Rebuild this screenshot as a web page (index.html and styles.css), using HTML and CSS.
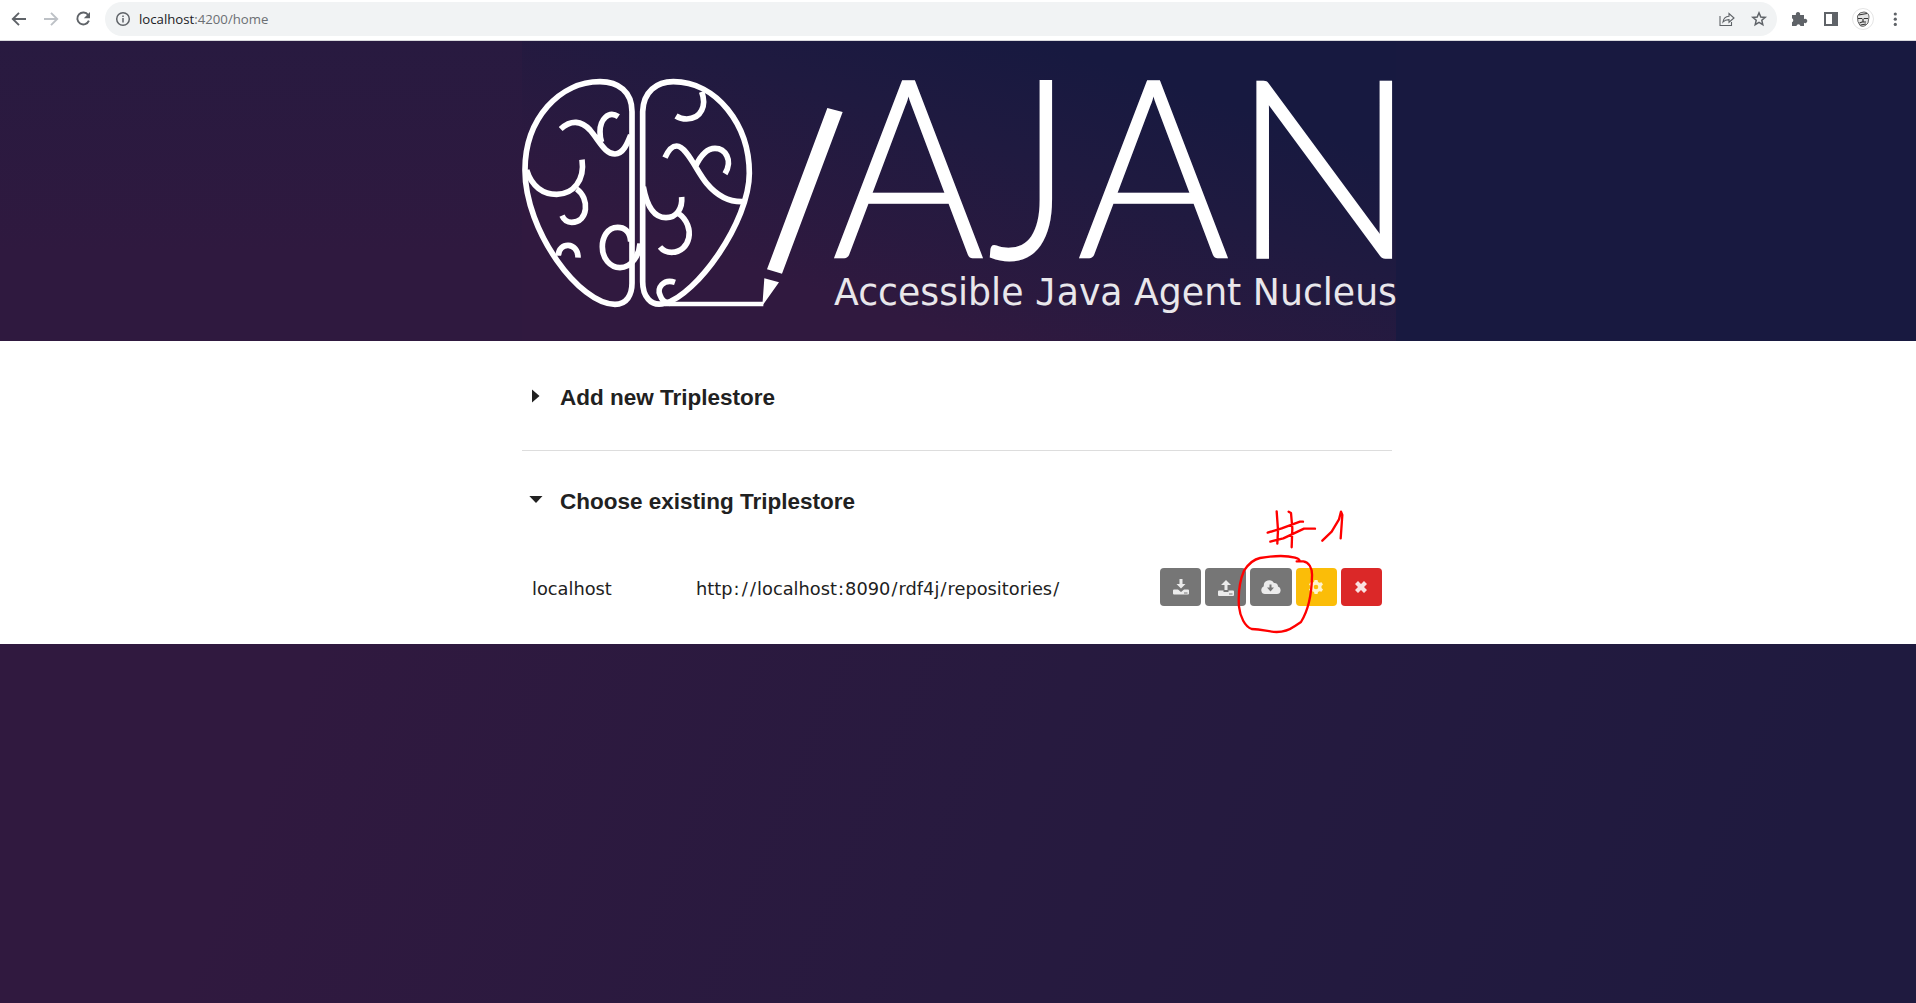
FILE: index.html
```html
<!DOCTYPE html>
<html lang="en">
<head>
<meta charset="utf-8">
<title>AJAN</title>
<link rel="stylesheet" href="styles.css">
</head>
<body>
<div class="browser-bar">
  <svg class="nav-icons" viewBox="0 0 105 40" fill="none" stroke="#5f6368" stroke-width="1.9">
    <path d="M26 19H13M19 12.8L12.8 19L19 25.2"/>
    <path stroke="#bdc1c6" d="M44 19H57M51 12.8L57.2 19L51 25.2"/>
    <path d="M88.2 15A6 6 0 1 0 88.9 20.7"/>
    <path fill="#5f6368" stroke="none" d="M90 12V18.2H83.8Z"/>
  </svg>
  <div class="address">
    <svg class="info" viewBox="0 0 16 16" fill="none" stroke="#5f6368" stroke-width="1.5"><circle cx="8" cy="8" r="6.3"/><path d="M8 7V11.5M8 4.4V6"/></svg>
    <span class="url"><b>localhost</b>:4200/home</span>
    <svg class="address-actions" viewBox="0 0 56 20" fill="none" stroke="#5f6368" stroke-width="1.1">
      <path d="M3 7V16.5H14.5V13M6 13C6.5 9 9 7.4 12 7.2V4.5L17 9L12 13.2V10.6C9.5 10.6 7.5 11.2 6 13Z"/>
      <path stroke-width="1.5" d="M42 3.8L43.8 8L48.2 8.4L44.8 11.3L45.8 15.7L42 13.4L38.2 15.7L39.2 11.3L35.8 8.4L40.2 8Z"/>
    </svg>
  </div>
  <svg class="toolbar" viewBox="1777 0 139 40">
    <path fill="#5f6368" d="M1792 15H1796A2.2 2.2 0 1 1 1800 15H1804V19A2.2 2.2 0 1 1 1804 22.8V26H1800.5A2.1 2.1 0 0 0 1796.4 26H1792V22.3A2.2 2.2 0 0 0 1792 18.3Z"/>
    <path fill="none" stroke="#5f6368" stroke-width="2" d="M1825 13H1837V25H1825Z"/>
    <path fill="#5f6368" d="M1832 12H1838V26H1832Z"/>
    <circle cx="1863" cy="19" r="10.5" fill="#fff" stroke="#ddd" stroke-width=".8"/>
    <path fill="#e4e4e4" stroke="#555" stroke-width=".9" d="M1857.500 16Q1859 12 1864 12Q1869 12.500 1869 17L1868 23Q1864 28 1860 25.500Q1857 22 1857.500 16Z"/>
    <path fill="none" stroke="#333" stroke-width="1.2" d="M1858.500 15L1867 13.500M1858 18.500H1862M1864 18.500H1868M1863 18.500V21.500M1859.500 23L1862 22H1866M1860.500 25L1866 24"/>
    <g fill="#5f6368"><circle cx="1895.300" cy="14" r="1.600"/><circle cx="1895.300" cy="19.200" r="1.600"/><circle cx="1895.300" cy="24.400" r="1.600"/></g>
  </svg>
</div>
<header class="banner">
  <svg class="logo" viewBox="522 41 874 300">
    <g transform="translate(510 65) scale(.33333)" fill="none" stroke="#fff" stroke-width="17">
      <path d="M366 140C366 80 325 50 270 50C150 50 45 160 45 315C45 500 210 718 315 718C350 718 366 690 366 655Z"/>
      <path d="M398 140C400 80 440 50 490 50C620 50 718 180 718 325C718 470 560 690 465 715C420 728 398 690 398 650Z"/>
      <path d="M152 192C185 162 215 168 240 195C270 230 285 267 315 267C340 267 352 235 362 210M325 155C295 135 270 165 270 200Q270 220 275 232"/>
      <path d="M50 315C65 365 100 388 140 388C190 388 225 345 216 284M200 372C240 400 235 472 185 472Q165 472 156 452"/>
      <path d="M145 572C145 530 205 530 204 578"/>
      <path d="M362 530C360 495 340 487 323 487C290 487 277 520 277 545C277 580 300 608 330 608C365 608 388 570 390 535"/>
      <path d="M575 80C590 120 575 162 530 162Q512 162 498 153"/>
      <path d="M465 278C475 255 485 243 500 243C530 243 560 320 590 355C615 385 650 412 700 410M556 305C570 275 590 250 615 250C645 250 670 285 645 326"/>
      <path d="M400 365C410 420 430 458 468 458C500 458 518 430 515 396M505 445C560 485 540 562 485 562Q463 562 450 546"/>
      <path d="M495 652C460 640 440 670 450 690Q457 712 480 715"/>
      <path stroke-width="14" d="M465 717H760"/>
    </g>
    <g transform="translate(740 65) scale(.33333)" fill="#fff"><path d="M262 129L308 141L126 626L81 613ZM73 640L117 652L67 722Z"/></g>
    <g class="wordmark">
      <text x="832" y="258" textLength="153" lengthAdjust="spacingAndGlyphs">A</text>
      <text class="hook" transform="translate(988.500 258) scale(.79 1)">J</text>
      <text x="1077" y="258" textLength="153" lengthAdjust="spacingAndGlyphs">A</text>
      <text transform="translate(1231.500 258) scale(.987 1)">N</text>
    </g>
    <text class="tagline" x="834" y="305" textLength="563" lengthAdjust="spacingAndGlyphs">Accessible <tspan class="serif-j">J</tspan>ava Agent Nucleus</text>
  </svg>
</header>
<main class="panel">
  <div class="content">
    <section class="section add">
      <h2><svg class="caret" viewBox="0 0 14 14"><path d="M3 .5L10.500 7L3 13.500Z"/></svg>Add new Triplestore</h2>
    </section>
    <section class="section choose">
      <h2><svg class="caret" viewBox="0 0 14 14"><path d="M.3 3L13.500 3L7 10Z"/></svg>Choose existing Triplestore</h2>
      <div class="store">
        <span class="name">localhost</span>
        <span class="uri">http<i>:</i><i>/</i><i>/</i>localhost<i>:</i>8090<i>/</i>rdf4j<i>/</i>repositories<i>/</i></span>
        <div class="actions">
          <button class="btn"><svg viewBox="0 0 16 16"><path fill-rule="evenodd" d="M6.500 0H9.500V5H12.500L8 9.500L3.500 5H6.500ZM1 10.500H5L8 13L11 10.500H15Q16 10.500 16 11.500V14.500Q16 15.500 15 15.500H1Q0 15.500 0 14.500V11.500Q0 10.500 1 10.500ZM11 13.500V14.500H14.500V13.500Z"/></svg></button>
          <button class="btn low"><svg viewBox="0 0 16 16"><path fill-rule="evenodd" d="M8 0L13 5H9.500V10H6.500V5H3ZM1 10.500H5.500V12H10.500V10.500H15Q16 10.500 16 11.500V15Q16 16 15 16H1Q0 16 0 15V11.500Q0 10.500 1 10.500ZM11 13.500V14.500H14.500V13.500Z"/></svg></button>
          <button class="btn"><svg class="cloud" viewBox="0 0 20 14"><path fill-rule="evenodd" d="M4 14A4 4 0 0 1 2.800 6.300A5.500 5.500 0 0 1 13 3A3.500 3.500 0 0 1 17 6.600A3.800 3.800 0 0 1 16 14ZM8.500 4.500V7.500H6L9.500 11.500L13 7.500H10.500V4.500Z"/></svg></button>
          <button class="btn edit"><svg viewBox="0 0 16 16"><path fill-rule="evenodd" d="M6.500 1H9.500L10 3L11.500 3.800L13.500 3.200L15 5.600L13.500 7V9L15 10.400L13.500 12.800L11.500 12.200L10 13L9.500 15H6.500L6 13L4.500 12.200L2.500 12.800L1 10.400L2.500 9V7L1 5.600L2.500 3.200L4.500 3.800L6 3ZM8 5.700A2.300 2.300 0 1 0 8 10.300A2.300 2.300 0 1 0 8 5.700Z"/></svg></button>
          <button class="btn remove"><svg viewBox="0 0 16 16"><path d="M2 5L5 2L8 5L11 2L14 5L11 8L14 11L11 14L8 11L5 14L2 11L5 8Z"/></svg></button>
        </div>
      </div>
    </section>
  </div>
</main>
<svg class="annotation" viewBox="0 0 780 450" fill="none" stroke="#f00" stroke-width="7" stroke-linecap="round" stroke-linejoin="round">
  <path d="M410 34L414 90L412 131M446 35L453 39L457 85L455 142M383 98L425 85L480 65H489M391 125L405 121L430 115L492 86H525M547 122L575 95L597 58L603 35L607 45L602 115"/>
  <path d="M470 184H490C505 186 518 202 516 230C515 275 505 330 483 366L465 378C445 392 430 396 410 396C385 396 370 388 335 387C315 380 300 350 297 320C294 280 300 240 312 212C330 185 345 177 360 174C395 168 440 166 465 173C478 177 480 180 478 184"/>
</svg>
</body>
</html>
```
FILE: styles.css
```css
* { box-sizing: border-box; }
body {
  margin: 0;
  height: 1003px;
  overflow: hidden;
  position: relative;
  background: linear-gradient(112deg, #30193f 25%, #271a3f 58%, #1f1a3f 92%);
  font-family: "DejaVu Sans", sans-serif;
  color: #212121;
}
.browser-bar {
  height: 41px;
  display: flex;
  align-items: flex-start;
  background: #fff;
  border-bottom: 1px solid #d8d8dc;
}
.nav-icons { width: 105px; height: 40px; flex: none; }
.address {
  flex: 1;
  display: flex;
  align-items: center;
  height: 34px;
  margin: 2px 0 0 0;
  padding: 0 4px 0 10px;
  border-radius: 17px;
  background: #f1f3f4;
}
.info { width: 16px; height: 16px; }
.url { margin-left: 8px; font: 13.2px "Open Sans", sans-serif; color: #6b6f73; }
.url b { font-weight: 400; color: #202124; }
.address-actions { width: 56px; height: 20px; margin-left: auto; }
.toolbar { width: 139px; height: 40px; flex: none; }
.banner {
  height: 300px;
  display: flex;
  padding-left: 522px;
  background: linear-gradient(90deg, transparent 1396px, #181940 1396px),
    linear-gradient(180deg, #281a40 0, #2f193f 70%);
}
.logo {
  width: 874px;
  height: 300px;
  background: linear-gradient(18deg, #30193f 25%, #1f1a40 60%, #171940 80%);
}
.wordmark {
  font: 300 249px Lato, sans-serif;
  fill: #fff;
  stroke: #fff;
  stroke-width: 1.5px;
}
.wordmark .hook { stroke-width: 3px; }
.tagline { font: 37px "DejaVu Sans", sans-serif; fill: #e9e7eb; }
.serif-j { font-family: "DejaVu Sans Mono", monospace; }
.panel { height: 303px; background: #fff; display: flex; justify-content: center; }
.content { width: 870px; margin-right: 2px; }
.section { display: flex; flex-direction: column; }
.add { height: 110px; border-bottom: 1px solid #ddd; padding-top: 42px; }
.choose { padding-top: 36px; }
h2 {
  display: flex;
  align-items: center;
  margin: 0;
  height: 30px;
  padding-left: 7px;
  font: 700 22.5px/30px "Liberation Sans", sans-serif;
}
.caret { width: 14px; height: 14px; margin: -4px 17px 0 0; fill: #212121; }
.store { display: flex; align-items: center; height: 38px; margin-top: 51px; padding: 0 10px; font-size: 17.8px; }
.name { width: 164px; padding-top: 2px; }
.uri { flex: 1; padding-top: 2px; }
.uri i { font-style: normal; padding: 0 1.1px; }
.actions { display: flex; gap: 4px; }
.btn {
  display: flex;
  align-items: center;
  justify-content: center;
  width: 41.2px;
  height: 38px;
  padding: 0;
  border: 0;
  border-radius: 4px;
  background: #767676;
}
.btn svg { width: 16px; height: 16px; fill: #ebebeb; }
.btn.low svg { margin-top: 2px; }
.btn .cloud { width: 20px; height: 14px; }
.btn.edit { background: #fbbd08; }
.btn.edit svg { fill: #fff3cf; }
.btn.remove { background: #db2828; }
.btn.remove svg { fill: #fae0e0; }
.annotation { position: absolute; left: 1140px; top: 500px; width: 260px; height: 150px; }
```
